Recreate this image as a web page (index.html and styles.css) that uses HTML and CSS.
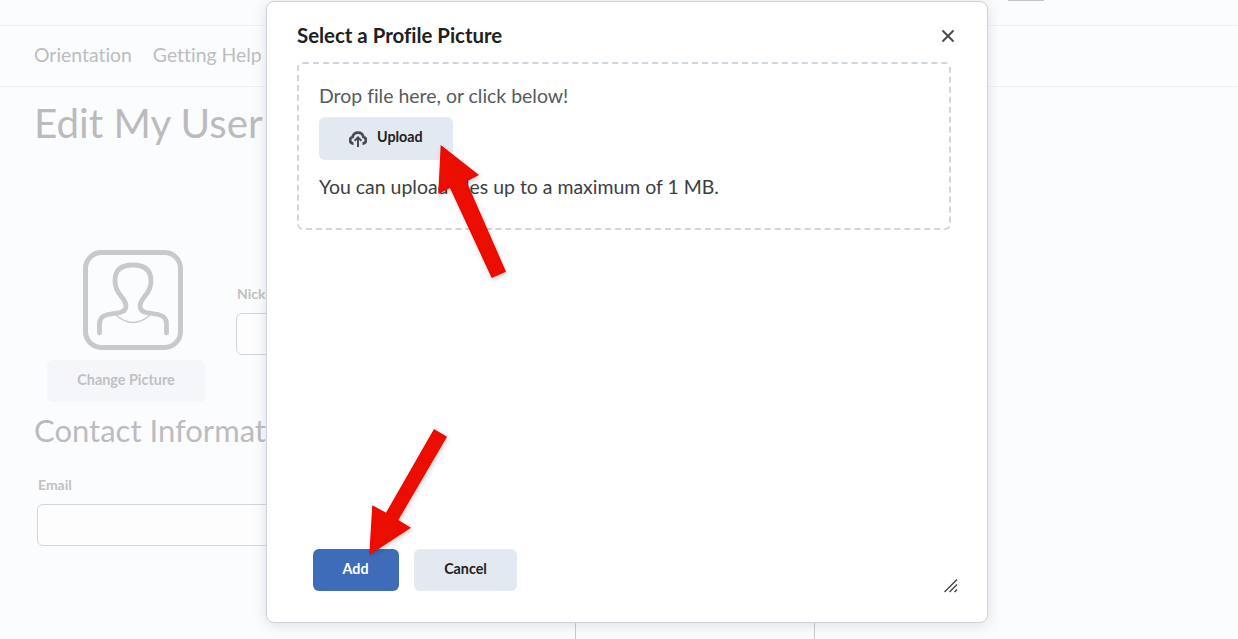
FILE: index.html
```html
<!DOCTYPE html>
<html lang="en">
<head>
<meta charset="utf-8">
<title>Select a Profile Picture</title>
<link rel="stylesheet" href="styles.css">
</head>
<body>
<div class="page">
  <header class="topbar"><span class="top-tab"></span></header>
  <nav class="nav"><a>Orientation</a><a>Getting Help</a></nav>
  <main class="content">
    <h1 class="title">Edit My User Profile</h1>
    <section class="profile">
      <div class="picture-col">
        <svg class="avatar" viewBox="0 0 100 100" aria-hidden="true">
          <rect x="2.5" y="2.5" width="95" height="95" rx="16" fill="none" stroke="#c9c9c9" stroke-width="5"/>
          <path d="M16.500 83V74Q16.500 66 25 64.500L37 62.500Q43 61 43 56Q43 52 38 46Q32 39 32 31Q32 15 50 15Q68 15 68 31Q68 39 62 46Q57 52 57 56Q57 61 63 62.500L75 64.500Q83.500 66 83.500 74V83" fill="none" stroke="#c9c9c9" stroke-width="4.800" stroke-linecap="round" stroke-linejoin="round"/>
          <path d="M33 65Q50 80 67 65" fill="none" stroke="#c9c9c9" stroke-width="1.500"/>
        </svg>
        <button class="ghost-btn"><span>Change Picture</span></button>
      </div>
      <div class="nick-col">
        <label class="field-label">Nickname</label>
        <div class="input nick-input"></div>
      </div>
    </section>
    <h2 class="subtitle">Contact Information</h2>
    <label class="field-label email-label">Email</label>
    <div class="input email-input"></div>
    <div class="lower-box"></div>
  </main>
</div>

<div class="dialog" role="dialog">
  <div class="dialog-head">
    <h3 class="dialog-title">Select a Profile Picture</h3>
    <svg class="close" viewBox="0 0 14 14" aria-hidden="true"><path d="M1.500 1.500L12.500 12.500M12.500 1.500L1.500 12.500" stroke="#494c4e" stroke-width="2" fill="none"/></svg>
  </div>
  <div class="dropzone">
    <p class="drop-text">Drop file here, or click below!</p>
    <button class="btn btn-upload">
      <svg class="upload-icon" viewBox="0 0 18 16" aria-hidden="true">
        <path d="M4.500 12.500H4A3.300 3.300 0 0 1 3.600 6 5.500 5.500 0 0 1 14.400 6 3.300 3.300 0 0 1 14 12.500H13.500" fill="none" stroke="#494c4e" stroke-width="2.800"/>
        <path d="M9 16V6.500M5.600 9.700L9 6.300L12.400 9.700" fill="none" stroke="#494c4e" stroke-width="2"/>
      </svg>
      <span class="upload-label">Upload</span>
    </button>
    <p class="limit-text">You can upload files up to a maximum of 1 MB.</p>
  </div>
  <div class="dialog-foot">
    <button class="btn btn-add">Add</button>
    <button class="btn btn-cancel">Cancel</button>
  </div>
  <svg class="resize" viewBox="0 0 14 14" aria-hidden="true">
    <path d="M0.500 13L13 0.500M5.500 13L13 5.500M10.500 13L13 10.500" stroke="#494c4e" stroke-width="1.500" fill="none"/>
  </svg>
</div>

<svg class="arrows" viewBox="0 0 1238 639" aria-hidden="true">
  <defs>
    <filter id="arrow-shadow" x="-20%" y="-20%" width="140%" height="140%">
      <feDropShadow dx="1" dy="2" stdDeviation="2" flood-color="#000" flood-opacity="0.2"/>
    </filter>
  </defs>
  <path filter="url(#arrow-shadow)" fill="#ea0706" d="M440.700 145L479 175L466.500 181.500L506 271.700L491.700 278L450 188L438.300 194Z"/>
  <path filter="url(#arrow-shadow)" fill="#ea0706" d="M434 429L447 436.700L398.300 520L411 527.700L369.300 555L372.300 505.300L386 512.700Z"/>
</svg>
</body>
</html>
```
FILE: styles.css
```css
* { box-sizing: border-box; }
html, body { margin: 0; height: 100%; overflow: hidden; }
body { background: #fbfcfe; font-family: Lato, "Open Sans", sans-serif; font-variant-ligatures: none; color: #bdbdbf; }
.page { width: 1238px; height: 639px; overflow: hidden; }

.topbar { height: 26px; border-bottom: 1px solid #f0f1f3; display: flex; justify-content: flex-end; padding-right: 194px; }
.top-tab { width: 36px; height: 1px; background: #c4c6c8; }

.nav { height: 61px; border-bottom: 1px solid #f0f1f3; display: flex; align-items: center; gap: 21px; padding: 0 0 3px 34px; font-size: 19.400px; color: #bcbdc0; }

.content { padding: 0 0 0 35px; }
.title { margin: 11px 0 0 -1px; font-size: 40.350px; line-height: 50px; font-weight: 400; color: #bbbbbd; white-space: nowrap; }

.profile { display: flex; margin-top: 102px; margin-left: 12px; }
.picture-col { width: 158px; display: flex; flex-direction: column; align-items: center; }
.avatar { display: block; width: 100px; height: 100px; margin-left: 14px; }
.ghost-btn { width: 158px; height: 42px; margin-top: 10px; padding: 0 0 3px; border: 0; border-radius: 6px; background: #f5f6f9; color: #bfc0c3; font: 700 14.400px Lato, sans-serif; }

.nick-col { margin: 36px 0 0 32px; }
.field-label { display: block; font-size: 14px; line-height: 16px; font-weight: 700; color: #c0c1c4; }
.input { height: 42px; border: 1px solid #d4d5d8; border-radius: 6px; background: #fdfdfe; }
.nick-input { width: 300px; margin-top: 11px; margin-left: -1px; }

.subtitle { margin: 8px 0 0 -1px; font-size: 31px; line-height: 40px; font-weight: 400; color: #bcbcbf; white-space: nowrap; }
.email-label { margin: 27px 0 0 3px; }
.email-input { width: 300px; margin: 11px 0 0 2px; }
.lower-box { width: 240px; height: 120px; margin: 30px 0 0 540px; border: 1px solid #c9cacc; border-top: 0; }

.dialog { position: absolute; left: 266px; top: 1px; width: 722px; height: 622px; background: #fff; border: 1px solid #ced3da; border-radius: 8px; box-shadow: 0 2px 14px rgba(80, 90, 110, 0.18); padding: 0 36px 30px 30px; display: flex; flex-direction: column; }
.dialog-head { height: 60px; display: flex; align-items: flex-start; justify-content: space-between; flex: none; }
.dialog-title { margin: 20px 0 0; font-size: 20.400px; line-height: 26px; font-weight: 700; color: #202122; }
.close { width: 14px; height: 14px; margin: 27px -4px 0 0; }

.dropzone { flex: none; height: 168px; border: 2px dashed #cdd5df; border-radius: 6px; padding: 19px 20px 0; }
.drop-text { margin: 0; font-size: 19.450px; line-height: 26px; color: #565a5c; }
.limit-text { margin: 14px 0 0; font-size: 19.450px; line-height: 26px; color: #3c3e40; }

.btn { border: 0; border-radius: 6px; font: 700 14.300px Lato, sans-serif; color: #202122; height: 42px; padding: 0 0 3px; }
.btn-upload { display: flex; align-items: center; gap: 10px; width: 134px; height: 43px; margin-top: 8px; padding: 0 0 0 30px; background: #e3e9f1; }
.upload-label { margin-bottom: 4px; }
.upload-icon { width: 18px; height: 16px; }

.dialog-foot { margin-top: auto; margin-bottom: 1px; display: flex; gap: 15px; padding-left: 16px; }
.btn-add { width: 86px; padding-right: 1px; background: #3e6cb9; color: #fff; }
.btn-cancel { width: 103px; background: #e3e9f1; }

.resize { position: absolute; right: 29px; bottom: 29px; width: 14px; height: 14px; }
.arrows { position: absolute; left: 0; top: 0; width: 1238px; height: 639px; pointer-events: none; }
```
